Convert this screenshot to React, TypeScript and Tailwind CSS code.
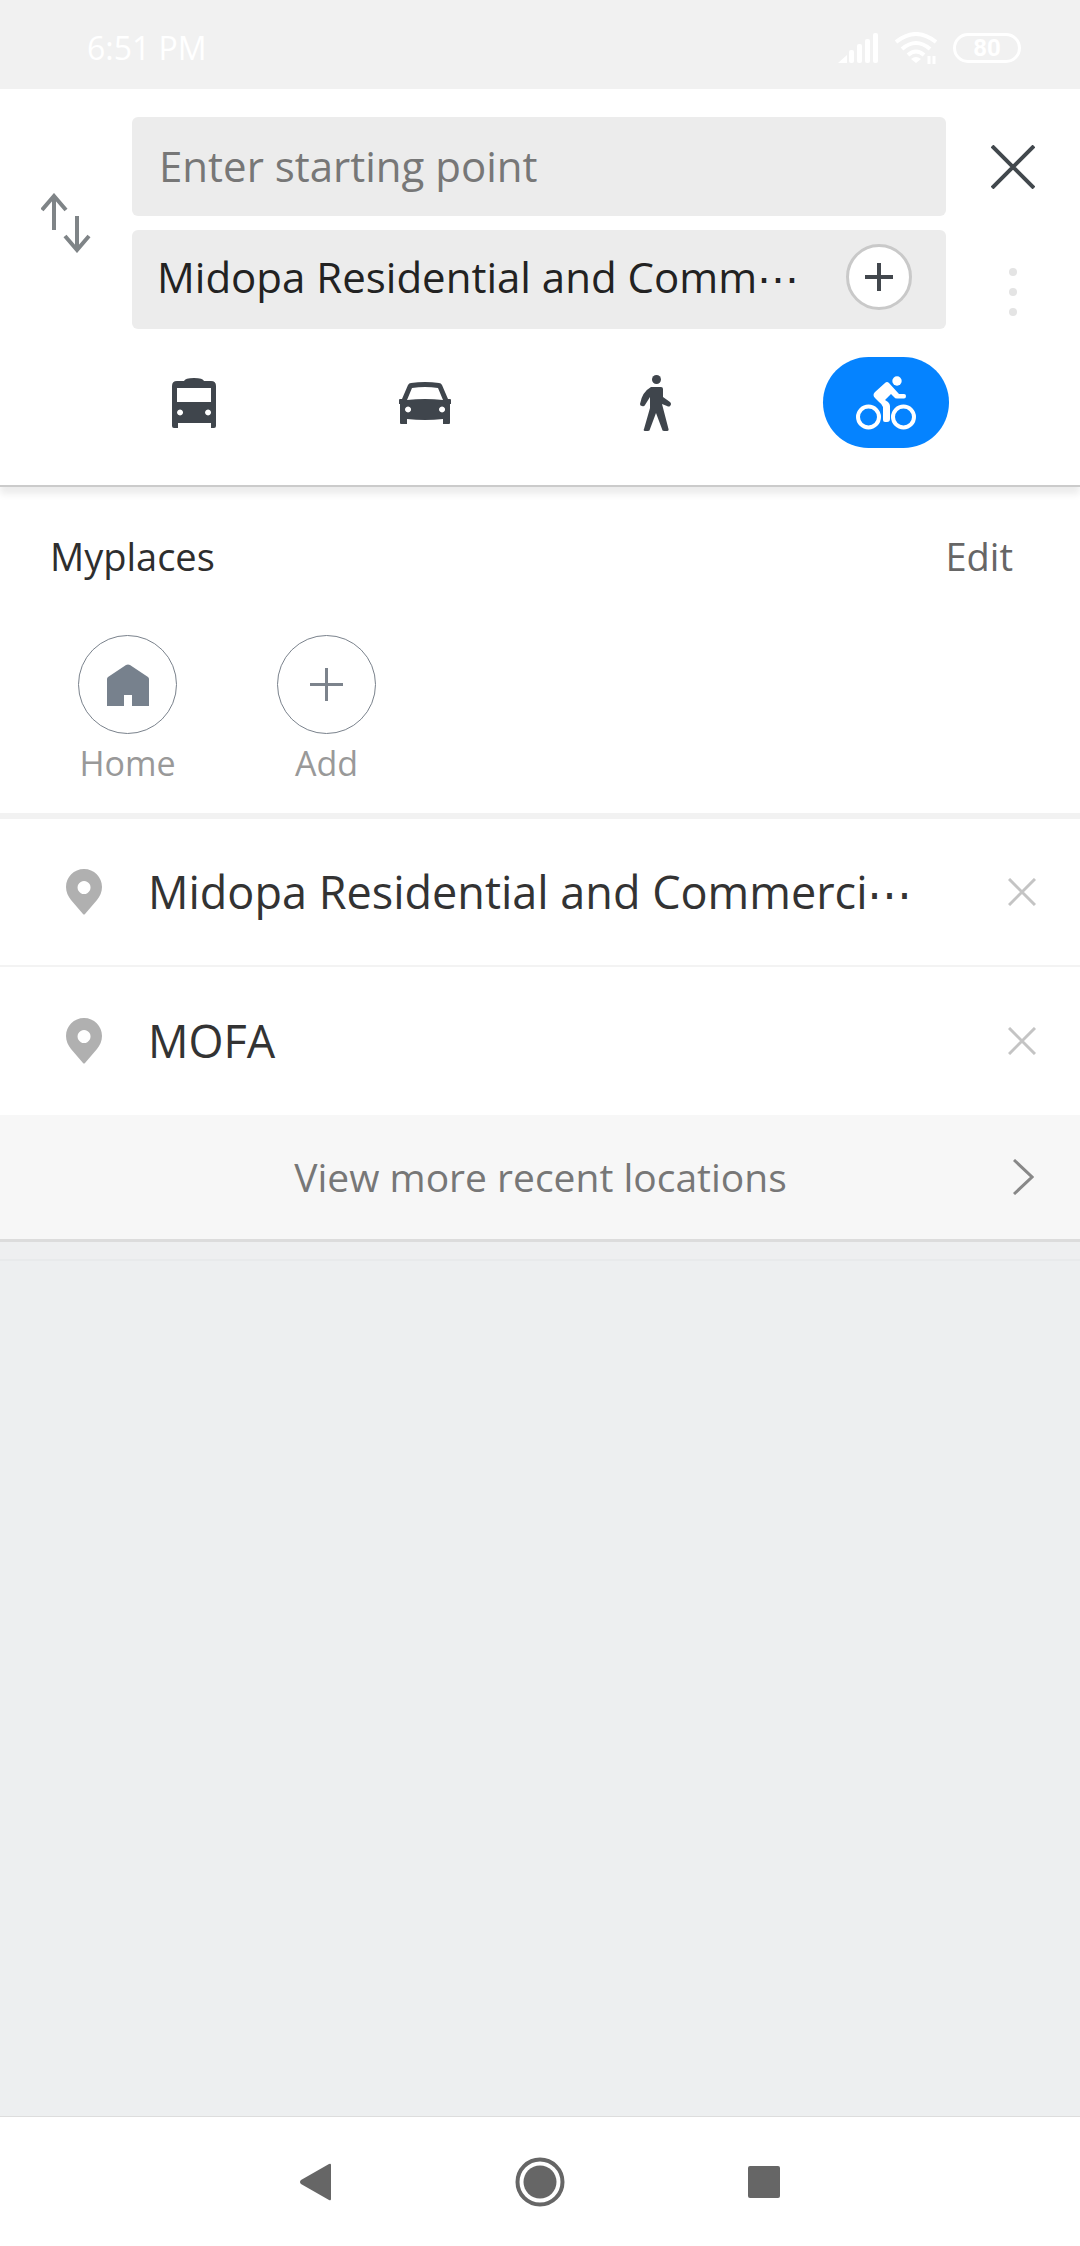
import type { ReactNode } from 'react';

const recentLocations = ['Midopa Residential and Commerci⋯', 'MOFA'];

function StatusBar() {
  return (
    <div className="flex h-[89px] items-center justify-between bg-[#f1f1f1] pt-[6px] pr-[59px] pl-[87px] text-white">
      <span className="text-[32px] leading-none">6:51 PM</span>
      <div className="flex items-center gap-4">
        <svg width="41" height="30" viewBox="0 0 41 30" fill="currentColor" aria-hidden="true">
          <path d="M0 30 9 22V30Z" />
          <rect x="11" y="17" width="5" height="13" rx="2" />
          <rect x="19" y="11" width="5" height="19" rx="2" />
          <rect x="27" y="6" width="5" height="24" rx="2" />
          <rect x="35" y="0" width="5" height="30" rx="2" />
        </svg>
        <svg width="42" height="32" viewBox="0 0 42 32" fill="none" stroke="currentColor" strokeWidth="4" aria-hidden="true">
          <path d="M1 10Q21-6 41 10M7 17Q21 5 35 17M13 23Q21 16 29 23" />
          <path d="M16 27Q21 23 26 27L21 31Z" fill="currentColor" stroke="none" />
          <path d="M34 24v8M39 24v8" strokeWidth="3" />
        </svg>
        <span className="flex h-[30px] w-[68px] items-center justify-center rounded-full border-3 border-white font-['Roboto',sans-serif] text-[24px] leading-none font-bold">
          80
        </span>
      </div>
    </div>
  );
}

function BusIcon() {
  return (
    <svg width="44" height="50" viewBox="0 0 44 50" fill="#3f454c" fillRule="evenodd" aria-hidden="true">
      <path d="M12 3Q13 0 22 0T32 3H39Q44 3 44 8V48Q44 50 42 50H39V45H6V50H2Q0 50 0 48V8Q0 3 5 3ZM5 10V24H39V10ZM8 31.500a3 3 0 1 0 .1 0ZM36 31.500a3 3 0 1 0 .1 0Z" />
    </svg>
  );
}

function CarIcon() {
  return (
    <svg width="52" height="42" viewBox="0 0 52 42" fill="#3f454c" fillRule="evenodd" aria-hidden="true">
      <path d="M12 1Q26-1 40 1Q42 1 43 3L49 17H51Q52 17 52 18V22H51V41Q51 42 50 42H44V37Q26 39 8 37V42H2Q1 42 1 41V22H0V18Q0 17 1 17H3L9 3Q10 1 12 1ZM13 6L8 18Q26 16 44 18L39 6Q26 4 13 6ZM9 24.500a3 3 0 1 0 .1 0ZM43 24.500a3 3 0 1 0 .1 0Z" />
    </svg>
  );
}

function WalkIcon() {
  return (
    <svg width="31" height="56" viewBox="0 0 31 56" fill="#3f454c" aria-hidden="true">
      <circle cx="16.500" cy="4.500" r="4.500" />
      <path d="M11 12H21Q23 12 23 14V22L30 27Q32 29 30 31Q29 32 27 31L22 29L28.500 54Q29 56 27 56H24Q22 56 22 54L16 38L10 54Q10 56 8 56H5Q3 56 4 54L10 33V22L5 30Q4 32 2 31Q0 31 0 29Q2 17 11 12Z" />
    </svg>
  );
}

function BikeIcon() {
  return (
    <svg width="60" height="54" viewBox="0 0 60 54" fill="#fff" aria-hidden="true">
      <circle cx="12.500" cy="41" r="10.500" fill="none" stroke="#fff" strokeWidth="4" />
      <circle cx="47.500" cy="41" r="10.500" fill="none" stroke="#fff" strokeWidth="4" />
      <circle cx="41" cy="5" r="4.700" />
      <path d="M29 7Q31 5 33 7L43 18H48Q50 18 50 20Q50 22.500 48 22.500H41Q39 22.500 38 21L35 18L29 24L32 26Q34 28 34 30V43Q34 46 31 46H29Q27 46 27 44V31Q26 28 23 26L19 22Q16 19 19 16Z" />
    </svg>
  );
}

function Cross({ size, stroke }: { size: number; stroke: number }) {
  return (
    <svg width={size} height={size} viewBox={`0 0 ${size} ${size}`} stroke="currentColor" strokeWidth={stroke} aria-hidden="true">
      <path d={`M1 1 ${size - 1} ${size - 1}M${size - 1} 1 1 ${size - 1}`} />
    </svg>
  );
}

function ModeButton({ label, active, children }: { label: string; active?: boolean; children: ReactNode }) {
  return (
    <button
      type="button"
      aria-label={label}
      aria-pressed={!!active}
      className={
        active
          ? 'flex h-[91px] w-[126px] items-center justify-center rounded-full bg-[#0583ff]'
          : 'flex h-[91px] w-[126px] items-center justify-center'
      }
    >
      {children}
    </button>
  );
}

function SearchHeader() {
  return (
    <header className="relative border-b-2 border-[#cbcbcb] bg-white pt-7 pb-[37px] shadow-[0_7px_7px_rgba(0,0,0,0.08)]">
      <div className="flex">
        <div className="flex w-[132px] items-center justify-center">
          <button type="button" aria-label="Swap start and destination">
            <svg width="50" height="60" viewBox="0 0 50 60" fill="none" stroke="#7f8487" strokeWidth="4" aria-hidden="true">
              <path d="M13 37V3M1 17 13 3 25 17M36 23V57M24 43 36 57 48 43" />
            </svg>
          </button>
        </div>
        <div className="flex min-w-0 flex-1 flex-col gap-[14px]">
          <input
            type="text"
            aria-label="Starting point"
            placeholder="Enter starting point"
            className="h-[99px] w-full rounded-md bg-[#ececec] px-[27px] pb-[2px] text-[42px] text-[#222] placeholder:text-[#777]"
          />
          <div className="flex h-[99px] items-center rounded-md bg-[#ececec] pr-[34px] pb-[5px] pl-[25px]">
            <input
              type="text"
              aria-label="Destination"
              defaultValue="Midopa Residential and Comm⋯"
              className="h-[90px] min-w-0 flex-1 bg-transparent pb-[2px] text-[42px] text-[#222]"
            />
            <button
              type="button"
              aria-label="Add stop"
              className="flex size-[66px] items-center justify-center rounded-full border-3 border-[#c9c9c9] bg-white"
            >
              <svg width="28" height="28" viewBox="0 0 28 28" stroke="#42474d" strokeWidth="4" aria-hidden="true">
                <path d="M14 0V28M0 14H28" />
              </svg>
            </button>
          </div>
        </div>
        <div className="flex w-[134px] flex-col items-center gap-[14px]">
          <button type="button" aria-label="Close" className="flex h-[99px] items-center text-[#42484d]">
            <Cross size={44} stroke={4} />
          </button>
          <button type="button" aria-label="More options" className="flex h-[99px] items-center pt-6">
            <svg width="8" height="48" viewBox="0 0 8 48" fill="#e4e4e4" aria-hidden="true">
              <circle cx="4" cy="4" r="4" />
              <circle cx="4" cy="24" r="4" />
              <circle cx="4" cy="44" r="4" />
            </svg>
          </button>
        </div>
      </div>
      <nav aria-label="Travel mode" className="mt-7 grid grid-cols-4 justify-items-center px-[79px]">
        <ModeButton label="Bus">
          <BusIcon />
        </ModeButton>
        <ModeButton label="Car">
          <CarIcon />
        </ModeButton>
        <ModeButton label="Walk">
          <WalkIcon />
        </ModeButton>
        <ModeButton label="Bicycle" active>
          <BikeIcon />
        </ModeButton>
      </nav>
    </header>
  );
}

function PlaceButton({ label, children }: { label: string; children: ReactNode }) {
  return (
    <button type="button" className="flex w-[199px] flex-col items-center gap-[7px]">
      <span className="flex size-[99px] items-center justify-center rounded-full border border-[#7a828c]">
        {children}
      </span>
      <span className="text-[34px] leading-[44px] text-[#999]">{label}</span>
    </button>
  );
}

function MyPlaces() {
  return (
    <section className="border-b-6 border-[#f2f2f2] bg-white pt-[45px] pb-7">
      <div className="flex items-center justify-between pr-[67px] pl-[50px] leading-[48px]">
        <h2 className="text-[38px] text-[#2e2e2e]">Myplaces</h2>
        <button type="button" className="text-[38px] text-[#666]">
          Edit
        </button>
      </div>
      <div className="mt-[55px] flex pl-7">
        <PlaceButton label="Home">
          <svg width="42" height="42" viewBox="0 0 42 42" fill="#77818d" aria-hidden="true">
            <path d="M19 1Q21 0 23 1L41 13Q42 14 42 15V42H25V31H17V42H0V15Q0 14 1 13Z" />
          </svg>
        </PlaceButton>
        <PlaceButton label="Add">
          <svg width="33" height="33" viewBox="0 0 33 33" stroke="#7c838c" strokeWidth="3" aria-hidden="true">
            <path d="M16.500 0V33M0 16.500H33" />
          </svg>
        </PlaceButton>
      </div>
    </section>
  );
}

function RecentLocations() {
  return (
    <section>
      <ul className="divide-y-2 divide-[#f3f3f3] bg-white">
        {recentLocations.map((name) => (
          <li key={name} className="flex h-[148px] items-center pr-[44px] pl-[66px]">
            <svg width="36" height="46" viewBox="0 0 36 46" fill="#b0b0b0" fillRule="evenodd" aria-hidden="true">
              <path d="M18 0C28 0 36 8 36 18C36 23 34 27 31 31L19 45Q18 46 17 45L5 31C2 27 0 23 0 18C0 8 8 0 18 0ZM18 12a6.500 6.500 0 1 0 .1 0Z" />
            </svg>
            <a href="#location" className="ml-[46px] min-w-0 flex-1 truncate text-[45px] text-[#333]">
              {name}
            </a>
            <button type="button" aria-label={`Remove ${name}`} className="text-[#c4c4c4]">
              <Cross size={28} stroke={3} />
            </button>
          </li>
        ))}
      </ul>
      <a
        href="#recent"
        className="flex h-[127px] items-center border-b-3 border-[#dcdcdc] bg-[#f7f7f7] pr-[46px] pl-[68px] text-[#777]"
      >
        <span className="flex-1 text-center text-[39px]">View more recent locations</span>
        <svg width="21" height="36" viewBox="0 0 21 36" fill="none" stroke="#888" strokeWidth="3" aria-hidden="true">
          <path d="M1 1 19 18 1 35" />
        </svg>
      </a>
    </section>
  );
}

function SystemNav() {
  return (
    <nav aria-label="System" className="flex h-[130px] justify-center border-t border-[#ddd] bg-white">
      <button type="button" aria-label="Back" className="flex w-56 items-center justify-center">
        <svg width="32" height="38" viewBox="0 0 32 38" fill="#666" aria-hidden="true">
          <path d="M29 1Q31 0 31 2V36Q31 38 29 37L1 21Q-1 19 1 17Z" />
        </svg>
      </button>
      <button type="button" aria-label="Home screen" className="flex w-56 items-center justify-center">
        <svg width="50" height="50" viewBox="0 0 50 50" fill="#666" aria-hidden="true">
          <circle cx="25" cy="25" r="22.500" fill="none" stroke="#666" strokeWidth="4" />
          <circle cx="25" cy="25" r="16.500" />
        </svg>
      </button>
      <button type="button" aria-label="Recent apps" className="flex w-56 items-center justify-center">
        <span className="size-8 rounded-xs bg-[#666]" />
      </button>
    </nav>
  );
}

export default function App() {
  return (
    <div className="flex min-h-screen flex-col bg-[#edeff0] font-['Open_Sans',sans-serif]">
      <StatusBar />
      <SearchHeader />
      <main className="flex-1">
        <MyPlaces />
        <RecentLocations />
        <div className="h-[19px] border-b-2 border-[#e8eaeb] bg-[#eeeff0]" />
      </main>
      <SystemNav />
    </div>
  );
}
